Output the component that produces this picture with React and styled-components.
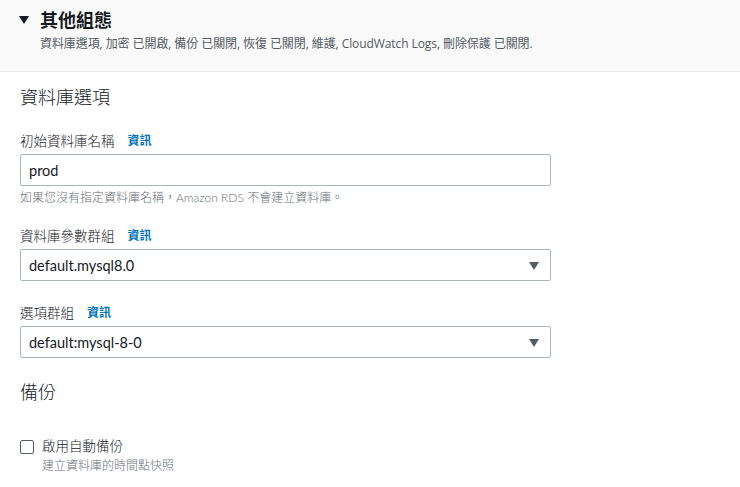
import React from "react";
import styled, { createGlobalStyle } from "styled-components";

const Global = createGlobalStyle`
  html, body { margin: 0; padding: 0; background: #ffffff; }
  body { font-family: "Open Sans", "Noto Sans CJK TC", sans-serif; color: #16191f; }
  * { box-sizing: border-box; }
`;

const Page = styled.div`
  width: 740px;
  height: 487px;
  overflow: hidden;
  background: #ffffff;
`;

const Header = styled.div`
  background: #fafafa;
  border-bottom: 1px solid #eaeded;
  padding: 8px 20px 0 19px;
  height: 72px;
`;

const HeaderTitleRow = styled.div`
  display: flex;
  align-items: center;
  gap: 11px;
`;

const Caret = styled.span`
  width: 0;
  height: 0;
  border-left: 5px solid transparent;
  border-right: 5px solid transparent;
  border-top: 8px solid #16191f;
`;

const HeaderTitle = styled.h2`
  margin: 0;
  font-size: 18px;
  font-weight: 700;
  line-height: 24px;
  color: #16191f;
`;

const HeaderDesc = styled.div`
  margin: 3px 0 0 21px;
  font-size: 12px;
  line-height: 18px;
  color: #545b64;
  letter-spacing: -0.08px;
`;

const Body = styled.div`
  padding: 13px 0 0 20px;
  width: 551px;
`;

const SectionTitle = styled.h3`
  margin: 0;
  font-size: 18px;
  font-weight: 300;
  line-height: 24px;
  color: #16191f;
`;

const Field = styled.div`
  margin-top: ${(p) => p.$top}px;
`;

const Label = styled.div`
  display: flex;
  align-items: center;
  gap: 13px;
  font-size: 13.5px;
  font-weight: 300;
  line-height: 20px;
  color: #16191f;
  margin-bottom: 3px;
`;

const Info = styled.a`
  color: #0073bb;
  font-size: 12px;
  font-weight: 700;
  text-decoration: none;
`;

const Control = styled.div`
  position: relative;
  height: 32px;
  border: 1px solid #aab7b8;
  border-radius: 2px;
  background: #ffffff;
  display: flex;
  align-items: center;
  padding: 0 8px;
  font-family: "Lato", "Noto Sans CJK TC", sans-serif;
  font-size: 14.5px;
  color: #16191f;
`;

const Arrow = styled.span`
  position: absolute;
  right: 11px;
  top: 12px;
  width: 0;
  height: 0;
  border-left: 5px solid transparent;
  border-right: 5px solid transparent;
  border-top: 8px solid #545b64;
`;

const Hint = styled.div`
  margin-top: 4px;
  font-family: "Lato", "Noto Sans CJK TC", sans-serif;
  font-size: 12px;
  font-weight: 300;
  line-height: 16px;
  color: #687078;
`;

const CheckRow = styled.div`
  margin-top: 32px;
  display: flex;
  gap: 8px;
`;

const Box = styled.span`
  width: 14px;
  height: 14px;
  margin-top: 4px;
  border: 1.5px solid #545b64;
  border-radius: 2px;
  flex: none;
`;

const CheckText = styled.div`
  display: flex;
  flex-direction: column;
`;

const CheckLabel = styled.div`
  font-size: 13.5px;
  font-weight: 300;
  line-height: 20px;
  color: #16191f;
`;

const CheckDesc = styled.div`
  font-size: 12px;
  font-weight: 300;
  line-height: 19px;
  color: #687078;
`;

export default function App() {
  return (
    <Page>
      <Global />
      <Header>
        <HeaderTitleRow>
          <Caret />
          <HeaderTitle>其他組態</HeaderTitle>
        </HeaderTitleRow>
        <HeaderDesc>
          資料庫選項, 加密 已開啟, 備份 已關閉, 恢復 已關閉, 維護, CloudWatch Logs, 刪除保護 已關閉.
        </HeaderDesc>
      </Header>
      <Body>
        <SectionTitle>資料庫選項</SectionTitle>
        <Field $top={22}>
          <Label>
            初始資料庫名稱 <Info>資訊</Info>
          </Label>
          <Control>prod</Control>
          <Hint>如果您沒有指定資料庫名稱，Amazon RDS 不會建立資料庫。</Hint>
        </Field>
        <Field $top={20}>
          <Label>
            資料庫參數群組 <Info>資訊</Info>
          </Label>
          <Control>
            default.mysql8.0
            <Arrow />
          </Control>
        </Field>
        <Field $top={22}>
          <Label>
            選項群組 <Info>資訊</Info>
          </Label>
          <Control>
            default:mysql-8-0
            <Arrow />
          </Control>
        </Field>
        <Field $top={22}>
          <SectionTitle>備份</SectionTitle>
        </Field>
        <CheckRow>
          <Box />
          <CheckText>
            <CheckLabel>啟用自動備份</CheckLabel>
            <CheckDesc>建立資料庫的時間點快照</CheckDesc>
          </CheckText>
        </CheckRow>
      </Body>
    </Page>
  );
}
